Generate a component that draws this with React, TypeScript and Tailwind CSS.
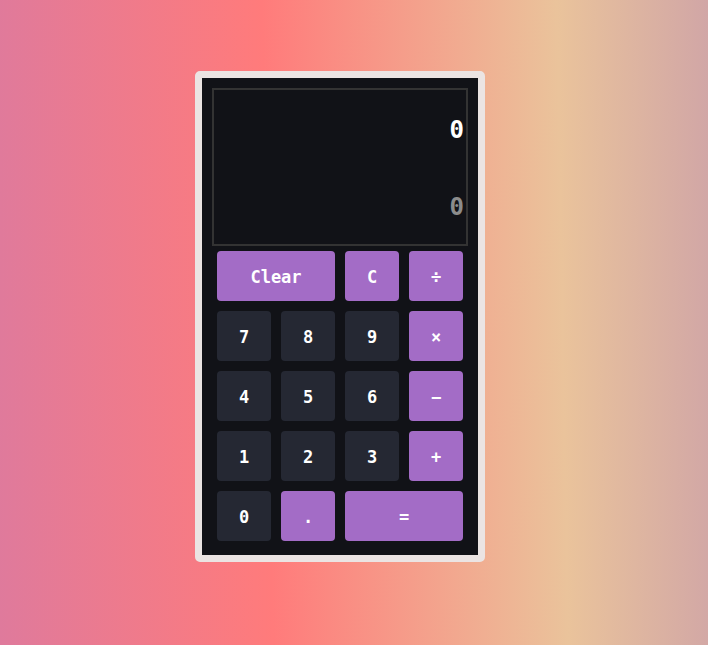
import React from "react";

const purple = "bg-[#a36cc6]";
const dark = "bg-[#252833]";

function Btn({ label, cls }: { label: string; cls: string }) {
  return (
    <button
      className={`${cls} h-[50px] rounded-[4px] text-white font-bold text-[17px] flex items-center justify-center pt-[3px]`}
    >
      {label}
    </button>
  );
}

export default function App() {
  return (
    <div
      className="w-[708px] h-[645px] overflow-hidden pt-[71px] pl-[195px] bg-[linear-gradient(89deg,#df7a9c_0%,#ff7b7b_38%,#eac39b_79%,#d1a6a6_100%)]"
      style={{ fontFamily: '"DejaVu Sans Mono", "Liberation Mono", monospace' }}
    >
      <div className="w-[290px] h-[491px] border-[7px] border-[#ebe4e3] rounded-[5px] bg-[#111217] pt-[10px] px-[10px]">
        <div className="h-[158px] border-2 border-[#333333] flex flex-col items-end pr-[2px] pt-[22px]">
          <div className="text-white text-[24px] leading-[36px] font-bold">0</div>
          <div className="text-[#8c8c8c] text-[24px] leading-[36px] mt-[41px] font-bold">0</div>
        </div>
        <div className="grid grid-cols-[54px_54px_54px_54px] auto-rows-[50px] gap-[10px] mt-[5px] ml-[5px]">
          <div className="col-span-2 grid">
            <Btn label="Clear" cls={purple} />
          </div>
          <Btn label="C" cls={purple} />
          <Btn label="÷" cls={purple} />
          <Btn label="7" cls={dark} />
          <Btn label="8" cls={dark} />
          <Btn label="9" cls={dark} />
          <Btn label="×" cls={purple} />
          <Btn label="4" cls={dark} />
          <Btn label="5" cls={dark} />
          <Btn label="6" cls={dark} />
          <Btn label="−" cls={purple} />
          <Btn label="1" cls={dark} />
          <Btn label="2" cls={dark} />
          <Btn label="3" cls={dark} />
          <Btn label="+" cls={purple} />
          <Btn label="0" cls={dark} />
          <Btn label="." cls={purple} />
          <div className="col-span-2 grid">
            <Btn label="=" cls={purple} />
          </div>
        </div>
      </div>
    </div>
  );
}
